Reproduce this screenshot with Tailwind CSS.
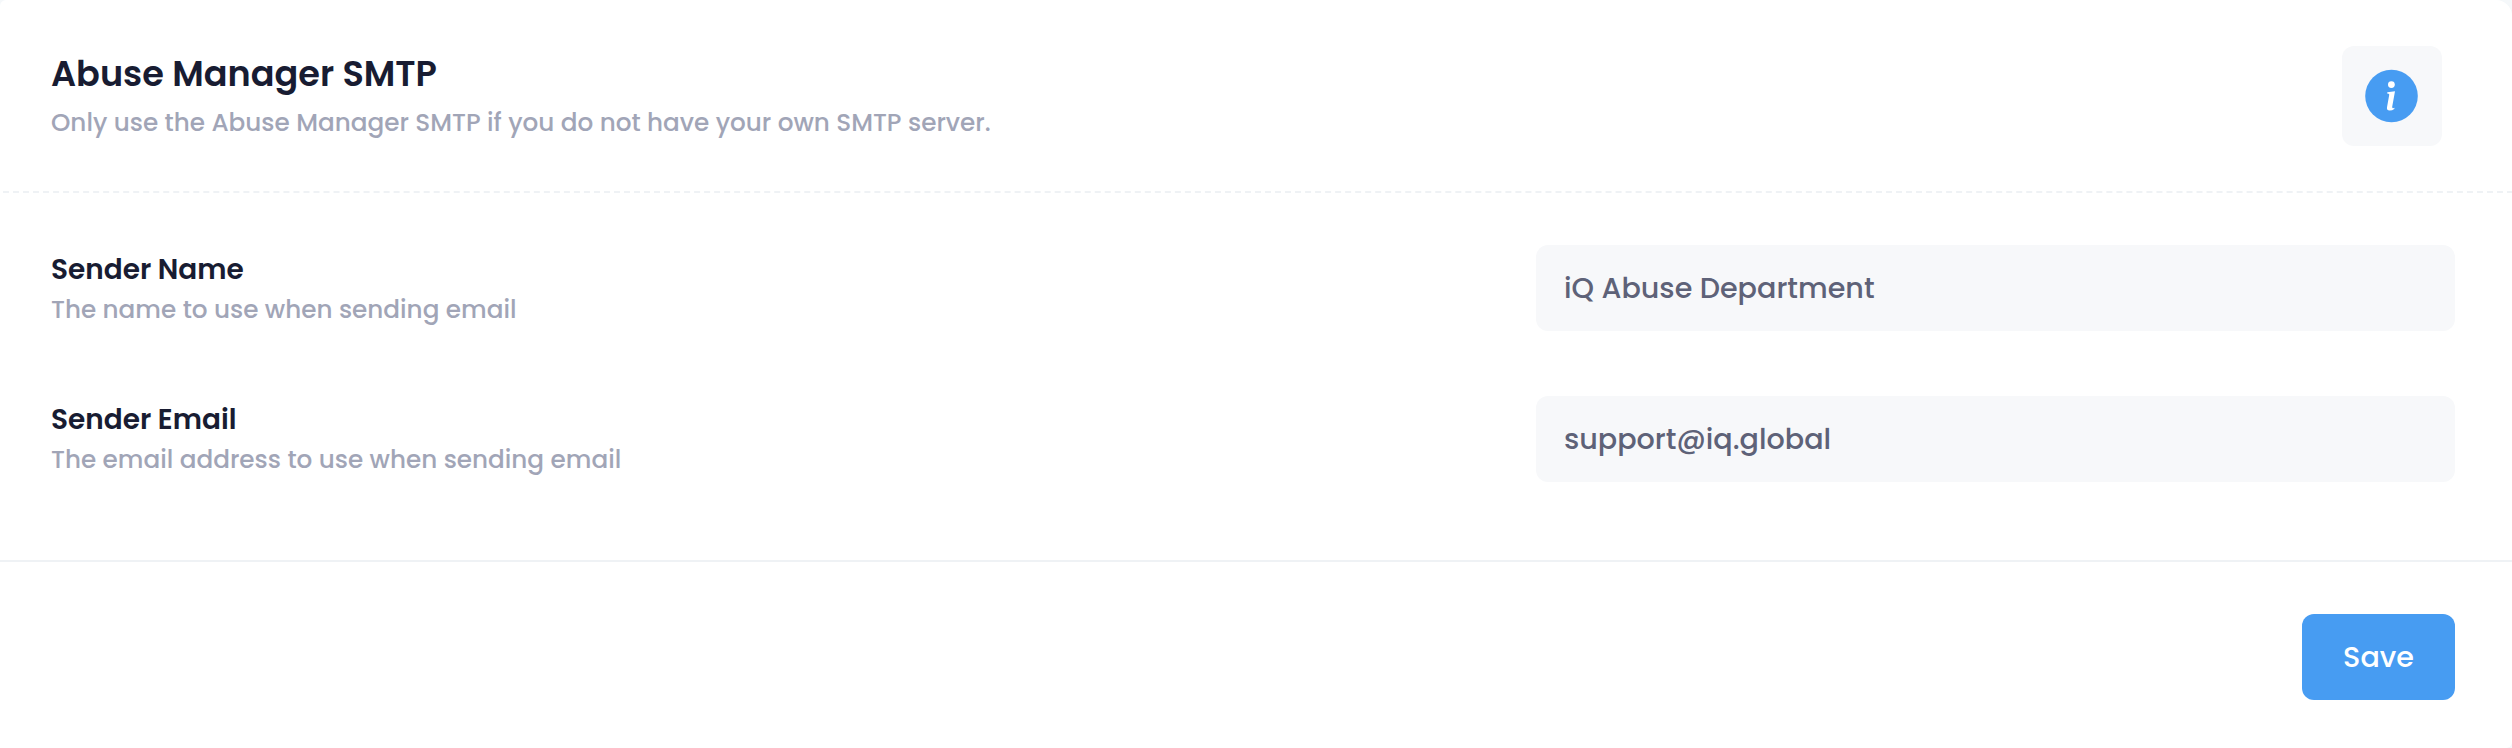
<!DOCTYPE html>
<html lang="en">
<head>
    <meta charset="utf-8">
    <title>Abuse Manager SMTP</title>
    <meta name="viewport" content="width=device-width, initial-scale=1.0">
    <script src="https://cdn.jsdelivr.net/npm/@tailwindcss/browser@4"></script>
</head>
<body class="bg-[#f5f8fa] font-['Poppins','Inter',sans-serif] overflow-hidden">
    <form class="h-[748px] bg-white rounded-tl-[6px] rounded-tr-[16px] rounded-br-[6px]">
        <!-- Card header -->
        <div class="flex items-start justify-between h-[193px] ml-[3px] -mr-px pl-[48px] pr-[71px] pt-[46px] border-b-2 border-dashed border-[#eff2f5]">
            <div class="mt-1 whitespace-nowrap">
                <h3 class="text-[35.1px] leading-[48px] font-semibold text-[#181c32]">Abuse Manager SMTP</h3>
                <p class="mt-[7px] text-[24.7px] leading-9 font-medium text-[#a1a5b7]">Only use the Abuse Manager SMTP if you do not have your own SMTP server.</p>
            </div>
            <button type="button" class="flex items-center justify-center size-[100px] rounded-xl bg-[#f7f8fa]" aria-label="Info">
                <svg class="size-[54px]" viewBox="0 0 54 54">
                    <circle cx="26.5" cy="27" r="26.3" fill="#479cf2"/>
                    <circle cx="26.4" cy="15.6" r="3.4" fill="#fff"/>
                    <path d="M22.300 23.300L30 22.300L27.200 37.800Q27 39.400 28.200 39.200L29.500 38.800L29.300 40Q27 41.700 24.600 41.600Q21.500 41.400 22 38.200L24.200 26Q24.400 24.800 23.400 24.700L22.200 24.600Z" fill="#fff"/>
                </svg>
            </button>
        </div>

        <!-- Card body -->
        <div class="flex flex-col gap-[65px] h-[367px] pl-[51px] pr-[57px] pt-[52px]">
            <div class="flex justify-between h-[86px]">
                <label for="senderName" class="mt-[5px] whitespace-nowrap">
                    <span class="block text-[27.95px] leading-10 font-semibold text-[#181c32]">Sender Name</span>
                    <span class="block mt-0.5 text-[24.7px] leading-9 font-medium text-[#a1a5b7]">The name to use when sending email</span>
                </label>
                <input id="senderName" type="text" value="iQ Abuse Department" class="w-[919px] h-[86px] px-7 rounded-xl bg-[#f7f8fa] text-[28.6px] font-medium text-[#5e6278] outline-none">
            </div>
            <div class="flex justify-between h-[86px]">
                <label for="senderEmail" class="mt-1 whitespace-nowrap">
                    <span class="block text-[27.95px] leading-10 font-semibold text-[#181c32]">Sender Email</span>
                    <span class="block mt-0.5 text-[24.7px] leading-9 font-medium text-[#a1a5b7]">The email address to use when sending email</span>
                </label>
                <input id="senderEmail" type="text" value="support@iq.global" class="w-[919px] h-[86px] px-7 rounded-xl bg-[#f7f8fa] text-[28.6px] font-medium text-[#5e6278] outline-none">
            </div>
        </div>

        <!-- Card footer -->
        <div class="flex justify-end pt-[52px] pr-[57px] border-t-2 border-[#eff2f5]">
            <button type="button" class="w-[153px] h-[86px] rounded-xl bg-[#479cf2] text-[28.6px] font-medium text-white">Save</button>
        </div>
    </form>
</body>
</html>
